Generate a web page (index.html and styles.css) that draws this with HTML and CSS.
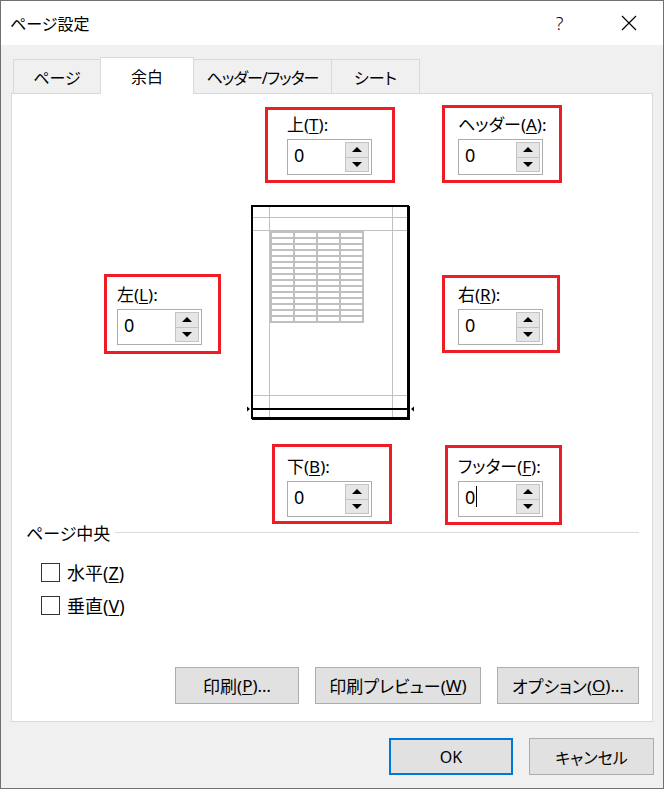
FILE: index.html
```html
<!DOCTYPE html>
<html lang="ja">

<head>
    <meta charset="UTF-8">
    <title>ページ設定</title>
    <link rel="stylesheet" href="styles.css">
</head>

<body>
    <div class="window">
        <div class="titlebar">
            <span class="title">ページ設定</span>
            <span class="caption-btn help">?</span>
            <span class="caption-btn close">
                <svg width="16" height="16" viewBox="0 0 16 16">
                    <path d="M1 1L15 15M15 1L1 15" stroke="#000" stroke-width="1.2" fill="none" />
                </svg>
            </span>
        </div>

        <div class="tabs">
            <div class="tab tab-page">ページ</div>
            <div class="tab tab-margin active">余白</div>
            <div class="tab tab-header">ヘッダー/フッター</div>
            <div class="tab tab-sheet">シート</div>
        </div>

        <div class="panel">
            <div class="margins">
                <div class="mark mark-top">
                    <div class="field-label">上(<u>T</u>):</div>
                    <div class="spin">
                        <span class="spin-value">0</span>
                        <span class="spin-btns"><span class="spin-up"></span><span class="spin-down"></span></span>
                    </div>
                </div>

                <div class="mark mark-header">
                    <div class="field-label">ヘッダー(<u>A</u>):</div>
                    <div class="spin">
                        <span class="spin-value">0</span>
                        <span class="spin-btns"><span class="spin-up"></span><span class="spin-down"></span></span>
                    </div>
                </div>

                <div class="mark mark-left">
                    <div class="field-label">左(<u>L</u>):</div>
                    <div class="spin">
                        <span class="spin-value">0</span>
                        <span class="spin-btns"><span class="spin-up"></span><span class="spin-down"></span></span>
                    </div>
                </div>

                <svg class="preview" width="170" height="217" viewBox="0 0 170 217">
                    <defs>
                        <pattern id="cells" x="25" y="26" width="23" height="6" patternUnits="userSpaceOnUse">
                            <rect width="23" height="6" fill="#c0c0c0" />
                            <rect x="2" y="2" width="21" height="4" fill="#fff" />
                        </pattern>
                    </defs>
                    <rect x="7" y="1" width="158" height="214" fill="#000" />
                    <rect x="7" y="1" width="156" height="212" fill="#fff" stroke="#000" stroke-width="2" />
                    <path d="M24.5 2V212M147.5 2V212M8 12.5H162M8 25.5H162M8 190.5H162" stroke="#c0c0c0" fill="none" />
                    <rect x="25" y="26" width="94" height="92" fill="#c0c0c0" />
                    <rect x="25" y="26" width="92" height="90" fill="url(#cells)" />
                    <path d="M7 204H163" stroke="#000" stroke-width="2" />
                    <polygon points="2,201.5 5,204 2,206.5" fill="#000" />
                    <polygon points="169,201.5 166,204 169,206.5" fill="#000" />
                </svg>

                <div class="mark mark-right">
                    <div class="field-label">右(<u>R</u>):</div>
                    <div class="spin">
                        <span class="spin-value">0</span>
                        <span class="spin-btns"><span class="spin-up"></span><span class="spin-down"></span></span>
                    </div>
                </div>

                <div class="mark mark-bottom">
                    <div class="field-label">下(<u>B</u>):</div>
                    <div class="spin">
                        <span class="spin-value">0</span>
                        <span class="spin-btns"><span class="spin-up"></span><span class="spin-down"></span></span>
                    </div>
                </div>

                <div class="mark mark-footer">
                    <div class="field-label">フッター(<u>F</u>):</div>
                    <div class="spin">
                        <span class="spin-value">0<span class="caret"></span></span>
                        <span class="spin-btns"><span class="spin-up"></span><span class="spin-down"></span></span>
                    </div>
                </div>
            </div>

            <div class="group-title">ページ中央</div>
            <div class="check-row first">
                <span class="checkbox"></span>
                <span>水平(<u>Z</u>)</span>
            </div>
            <div class="check-row">
                <span class="checkbox"></span>
                <span>垂直(<u>V</u>)</span>
            </div>

            <div class="panel-buttons">
                <div class="btn btn-print">印刷(<u>P</u>)…</div>
                <div class="btn btn-preview">印刷プレビュー(<u>W</u>)</div>
                <div class="btn btn-options">オプション(<u>O</u>)…</div>
            </div>
        </div>

        <div class="footer">
            <div class="btn btn-ok">OK</div>
            <div class="btn btn-cancel">キャンセル</div>
        </div>
    </div>
</body>

</html>
```

FILE: styles.css
```css
:root {
    --window-bg: #f0f0f0;
    --border-color: #d9d9d9;
    --button-bg: #e1e1e1;
    --button-border: #adadad;
    --mark-color: #ee1c25;
    --focus-color: #0078d7;
}

body {
    margin: 0;
    background: #ffffff;
    font-family: "Noto Sans", "Noto Sans CJK JP", sans-serif;
    font-size: 16px;
    color: #000;
    font-feature-settings: "palt";
}

u {
    text-underline-offset: 2px;
}

.window {
    width: 664px;
    height: 789px;
    box-sizing: border-box;
    border: 1px solid #707070;
    background: var(--window-bg);
    display: flex;
    flex-direction: column;
}

/* title bar */
.titlebar {
    height: 44px;
    flex: none;
    background: #fff;
    display: flex;
    align-items: center;
    padding-left: 9px;
}

.title {
    flex: 1;
}

.caption-btn {
    width: 69px;
    height: 44px;
    display: flex;
    align-items: center;
    justify-content: center;
}

.help {
    font-size: 18px;
    font-weight: 300;
}

/* tabs */
.tabs {
    height: 48px;
    flex: none;
    display: flex;
    align-items: flex-end;
    padding-left: 12px;
}

.tab {
    height: 34px;
    box-sizing: border-box;
    border: 1px solid var(--border-color);
    border-bottom: none;
    margin-left: -1px;
    display: flex;
    align-items: center;
    justify-content: center;
    padding-top: 1px;
}

.tab-page {
    width: 88px;
    margin-left: 0;
}

.tab-margin {
    width: 94px;
}

.tab-header {
    width: 139px;
    letter-spacing: -1px;
}

.tab-sheet {
    width: 89px;
}

.tab.active {
    height: 37px;
    margin-bottom: -1px;
    background: #fff;
    position: relative;
    z-index: 1;
    padding-top: 0;
}

/* panel */
.panel {
    margin-left: 10px;
    width: 642px;
    height: 629px;
    flex: none;
    box-sizing: border-box;
    border: 1px solid var(--border-color);
    background: #fff;
    display: flex;
    flex-direction: column;
}

.margins {
    display: grid;
    grid-template-columns: 228px 190px 1fr;
    grid-template-rows: 78px 217px 77px;
    row-gap: 22px;
    padding-top: 11px;
    align-items: start;
    justify-items: start;
}

.mark {
    box-sizing: border-box;
    border: 3px solid var(--mark-color);
}

.mark-top {
    grid-column: 2;
    grid-row: 1;
    width: 130px;
    height: 76px;
    margin: 2px 0 0 25px;
    padding: 4px 0 0 19px;
}

.mark-header {
    grid-column: 3;
    grid-row: 1;
    width: 120px;
    height: 78px;
    margin: 0 0 0 12px;
    padding: 6px 0 0 13px;
}

.mark-left {
    grid-column: 1;
    grid-row: 2;
    width: 117px;
    height: 80px;
    margin: 69px 0 0 92px;
    padding: 7px 0 0 10px;
}

.mark-right {
    grid-column: 3;
    grid-row: 2;
    width: 118px;
    height: 78px;
    margin: 70px 0 0 12px;
    padding: 6px 0 0 13px;
}

.mark-bottom {
    grid-column: 2;
    grid-row: 3;
    width: 120px;
    height: 80px;
    margin: 0 0 0 32px;
    padding: 9px 0 0 12px;
}

.mark-footer {
    grid-column: 3;
    grid-row: 3;
    width: 117px;
    height: 80px;
    margin: 1px 0 0 15px;
    padding: 8px 0 0 10px;
}

.preview {
    grid-column: 2;
    grid-row: 2;
    margin-left: 5px;
    display: block;
}

.field-label {
    height: 22px;
    line-height: 22px;
    margin-bottom: 3px;
    font-size: 17px;
    white-space: nowrap;
}

.spin {
    width: 85px;
    height: 36px;
    box-sizing: border-box;
    border: 1px solid #acacac;
    background: #fff;
    padding: 2px;
    display: flex;
}

.spin-value {
    flex: 1;
    font-size: 18px;
    padding: 0 0 5px 4px;
    display: flex;
    align-items: center;
}

.caret {
    display: inline-block;
    width: 1px;
    height: 21px;
    background: #000;
    margin-left: 1px;
}

.spin-btns {
    width: 24px;
    box-sizing: border-box;
    border: 1px solid #c4c4c4;
    display: flex;
    flex-direction: column;
}

.spin-up,
.spin-down {
    flex: 1;
    background: #e6e6e6;
    display: flex;
    align-items: center;
    justify-content: center;
}

.spin-up {
    border-bottom: 1px solid #c4c4c4;
}

.spin-up::after,
.spin-down::after {
    content: "";
    border-left: 5px solid transparent;
    border-right: 5px solid transparent;
}

.spin-up::after {
    border-bottom: 5px solid #000;
}

.spin-down::after {
    border-top: 5px solid #000;
}

/* page center group */
.group-title {
    height: 22px;
    display: flex;
    align-items: center;
    padding: 0 13px 0 14px;
    font-size: 17px;
}

.group-title::after {
    content: "";
    flex: 1;
    height: 1px;
    background: #dcdcdc;
    margin-left: 5px;
}

.check-row {
    height: 22px;
    display: flex;
    align-items: center;
    gap: 7px;
    padding-left: 29px;
    margin-top: 11px;
    font-size: 18px;
}

.check-row.first {
    margin-top: 18px;
}

.checkbox {
    width: 19px;
    height: 19px;
    box-sizing: border-box;
    border: 1px solid #333;
    background: #fff;
}

/* buttons */
.btn {
    height: 37px;
    box-sizing: border-box;
    border: 1px solid var(--button-border);
    background: var(--button-bg);
    display: flex;
    align-items: center;
    justify-content: center;
    white-space: nowrap;
}

.panel-buttons {
    margin-top: auto;
    display: flex;
    justify-content: flex-end;
    gap: 16px;
    padding: 0 13px 17px 0;
    font-size: 17px;
}

.btn-print {
    width: 124px;
}

.btn-preview {
    width: 166px;
}

.btn-options {
    width: 142px;
}

.footer {
    display: flex;
    justify-content: flex-end;
    gap: 16px;
    padding: 16px 9px 0 0;
}

.btn-ok {
    width: 124px;
    border: 2px solid var(--focus-color);
}

.btn-cancel {
    width: 125px;
}
```
